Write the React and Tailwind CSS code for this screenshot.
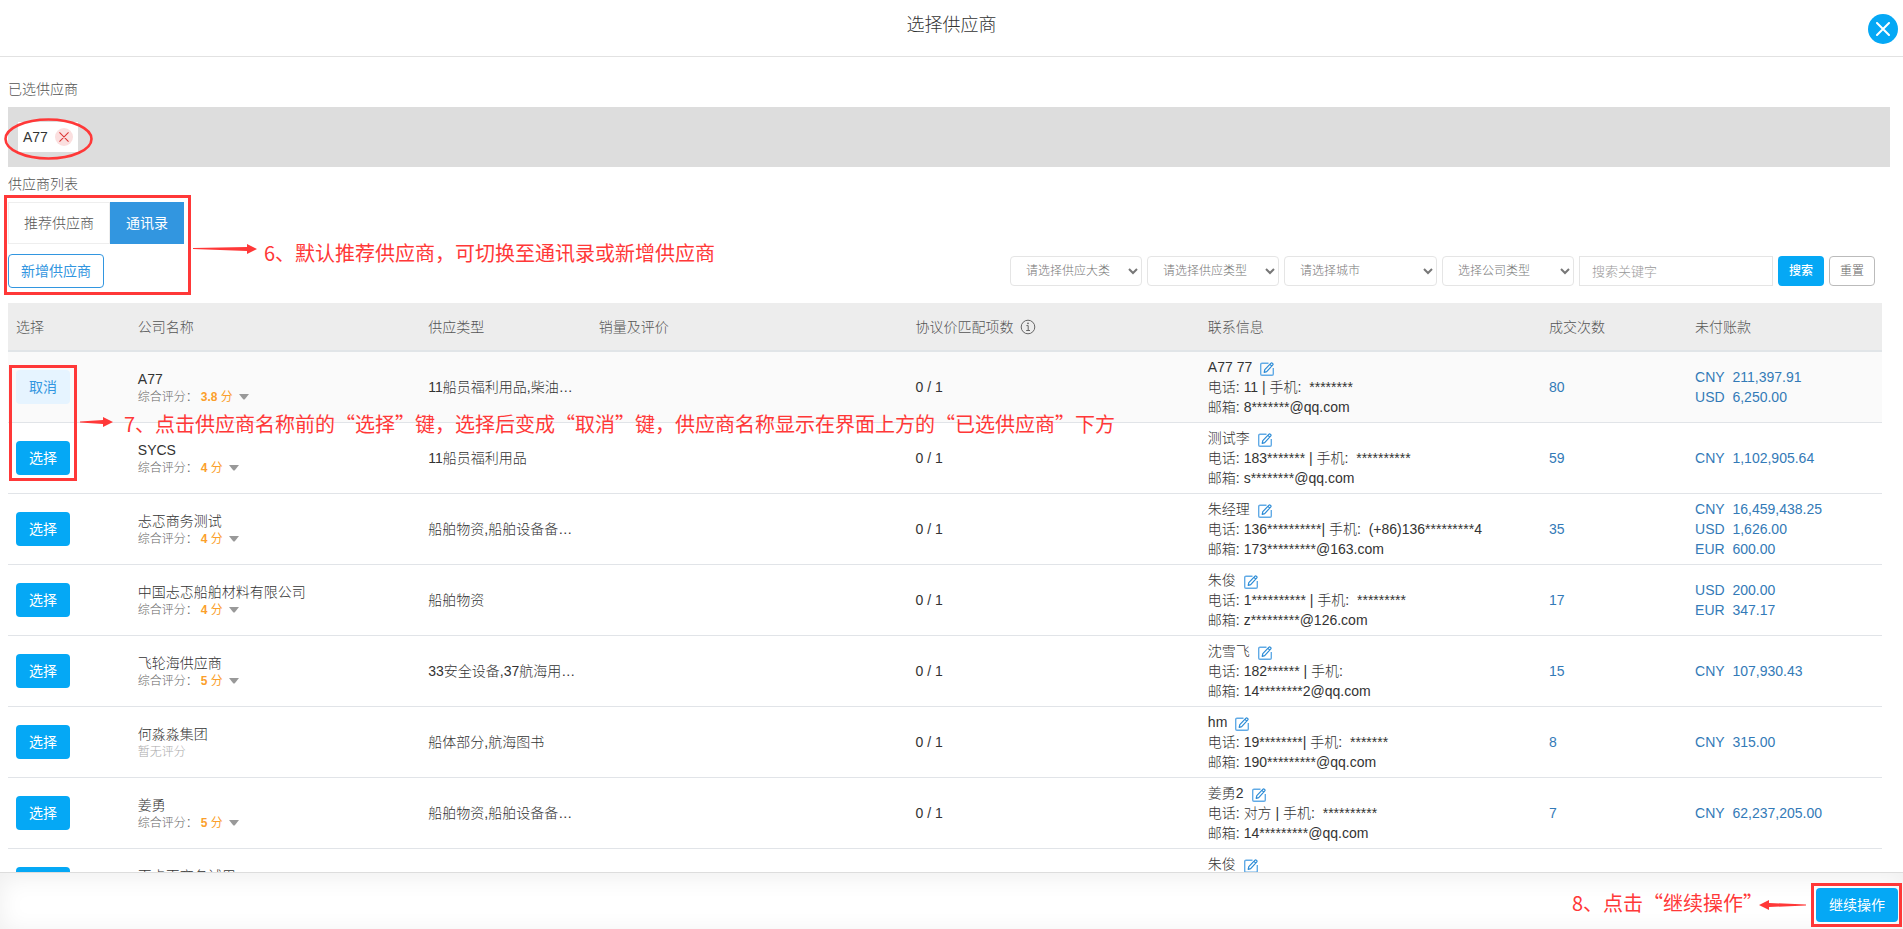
import { useState } from 'react'

const SUPPLIERS = [
  {
    name: 'A77', score: '3.8', type: '11船员福利用品,柴油…', deals: 80,
    contact: 'A77 77', phone: '11 |', mobile: '********', email: '8*******@qq.com',
    unpaid: [['CNY', '211,397.91'], ['USD', '6,250.00']],
  },
  {
    name: 'SYCS', score: '4', type: '11船员福利用品', deals: 59,
    contact: '测试李', phone: '183******* |', mobile: '**********', email: 's********@qq.com',
    unpaid: [['CNY', '1,102,905.64']],
  },
  {
    name: '忐忑商务测试', score: '4', type: '船舶物资,船舶设备备…', deals: 35,
    contact: '朱经理', phone: '136**********|', mobile: '(+86)136*********4', email: '173*********@163.com',
    unpaid: [['CNY', '16,459,438.25'], ['USD', '1,626.00'], ['EUR', '600.00']],
  },
  {
    name: '中国忐忑船舶材料有限公司', score: '4', type: '船舶物资', deals: 17,
    contact: '朱俊', phone: '1********** |', mobile: '*********', email: 'z*********@126.com',
    unpaid: [['USD', '200.00'], ['EUR', '347.17']],
  },
  {
    name: '飞轮海供应商', score: '5', type: '33安全设备,37航海用…', deals: 15,
    contact: '沈雪飞', phone: '182****** |', mobile: '', email: '14********2@qq.com',
    unpaid: [['CNY', '107,930.43']],
  },
  {
    name: '何淼淼集团', score: null, type: '船体部分,航海图书', deals: 8,
    contact: 'hm', phone: '19********|', mobile: '*******', email: '190*********@qq.com',
    unpaid: [['CNY', '315.00']],
  },
  {
    name: '姜勇', score: '5', type: '船舶物资,船舶设备备…', deals: 7,
    contact: '姜勇2', phone: '对方 |', mobile: '**********', email: '14*********@qq.com',
    unpaid: [['CNY', '62,237,205.00']],
  },
  {
    name: '忑忐忑商务试用', score: '4', type: '船舶物资', deals: 6,
    contact: '朱俊', phone: '1********** |', mobile: '*********', email: 'z*********@126.com',
    unpaid: [['CNY', '200.00']],
  },
]

const COLUMNS = [
  { label: '选择', width: 'w-[6.5%]' },
  { label: '公司名称', width: 'w-[15.5%]' },
  { label: '供应类型', width: 'w-[9.1%]' },
  { label: '销量及评价', width: 'w-[16.9%]' },
  { label: '协议价匹配项数', width: 'w-[15.6%]', info: true },
  { label: '联系信息', width: 'w-[18.2%]' },
  { label: '成交次数', width: 'w-[7.8%]' },
  { label: '未付账款', width: '' },
]

const FILTERS = [
  { label: '请选择供应大类', width: 'w-33' },
  { label: '请选择供应类型', width: 'w-33' },
  { label: '请选择城市', width: 'w-[153px]' },
  { label: '选择公司类型', width: 'w-33' },
]

function CrossIcon({ className, strokeWidth }) {
  return (
    <svg viewBox="0 0 14 14" className={className} fill="none" stroke="currentColor" strokeWidth={strokeWidth}>
      <path d="M1 1 13 13M13 1 1 13" strokeLinecap="round" />
    </svg>
  )
}

function EditIcon() {
  return (
    <svg viewBox="0 0 14 14" className="size-3.5" fill="none">
      <path d="M8.5 1.2H2A1.3 1.3 0 0 0 .7 2.5V12A1.3 1.3 0 0 0 2 13.3H12A1.3 1.3 0 0 0 13.3 12V6" stroke="#62abe6" strokeWidth="1.4" />
      <path d="M4.2 10.4 4.8 7.7 11 1.2Q11.6.7 12.3 1.2L12.8 1.7Q13.3 2.3 12.8 2.9L6.7 9.6ZM10 2.4 11.8 4.2" stroke="#2b8bd6" strokeWidth="1.2" strokeLinejoin="round" />
    </svg>
  )
}

function InfoIcon() {
  return (
    <svg viewBox="0 0 16 16" className="size-4" fill="none" stroke="#666" strokeWidth="1">
      <circle cx="8" cy="8" r="6.8" />
      <path d="M6.4 6.6H8.2V11.4M6.2 11.5H10" />
      <circle cx="8" cy="4.3" r="0.9" fill="#666" stroke="none" />
    </svg>
  )
}

function Score({ score }) {
  if (!score) return <div className="text-xs leading-[18px] text-[#aaa]">暂无评分</div>
  return (
    <div className="flex items-center text-xs leading-[18px] text-[#666]">
      综合评分：
      <span className="ml-[3px] font-normal text-[#fb9f2c]">
        <b>{score}</b> 分
      </span>
      <svg viewBox="0 0 10 6" className="ml-1.5 h-1.5 w-2.5" fill="#999">
        <path d="M0 0H10L6 5Q5 6 4 5Z" />
      </svg>
    </div>
  )
}

function SupplierRow({ supplier, selected, onToggle }) {
  return (
    <tr className={`h-[71px] border-b border-[#e1e4e8] ${selected ? 'bg-[#fafafa]' : 'bg-white'}`}>
      <td className="px-2">
        <button
          type="button"
          onClick={onToggle}
          className={`block h-[34px] w-[54px] rounded font-normal ${selected ? 'bg-[#e6f4ff] text-[#3296e0]' : 'bg-[#05a8f5] text-white'}`}
        >
          {selected ? '取消' : '选择'}
        </button>
      </td>
      <td className="px-2 pt-0.5">
        <div className="leading-[18px]">{supplier.name}</div>
        <Score score={supplier.score} />
      </td>
      <td className="px-2 whitespace-nowrap">{supplier.type}</td>
      <td />
      <td className="px-2">0 / 1</td>
      <td className="px-2 py-[5px] leading-5 whitespace-nowrap">
        <div className="flex items-center gap-2">
          {supplier.contact}
          <button type="button" aria-label="编辑" className="pt-1">
            <EditIcon />
          </button>
        </div>
        <div>电话: {supplier.phone} 手机:&nbsp;&nbsp;{supplier.mobile}</div>
        <div>邮箱: {supplier.email}</div>
      </td>
      <td className="px-2">
        <a href="#deals" className="text-[#337ab7]">{supplier.deals}</a>
      </td>
      <td className="px-2 leading-5">
        {supplier.unpaid.map(([currency, amount]) => (
          <a key={currency} href="#unpaid" className="block text-[#337ab7]">
            {currency}&nbsp;&nbsp;{amount}
          </a>
        ))}
      </td>
    </tr>
  )
}

// Red guide marks drawn over the dialog
function Guides() {
  return (
    <div className="pointer-events-none absolute inset-0 text-xl leading-7 font-normal whitespace-nowrap text-[#ff3838]">
      <svg className="absolute top-[117px] left-1 h-11 w-[90px]" viewBox="0 0 90 44" fill="none">
        <ellipse cx="44.5" cy="22" rx="43" ry="19.5" stroke="#ff3838" strokeWidth="2.6" />
      </svg>

      <div className="absolute top-[195px] left-1 h-[100px] w-[187px] border-3 border-[#ff3838]" />
      <svg className="absolute top-[243px] left-[193px] h-3 w-16" viewBox="0 0 64 12" fill="#ff3838">
        <path d="M0 5 54 4V1L64 6 54 11V8L0 6Z" />
      </svg>
      <p className="absolute top-[239px] left-[264px] font-['Noto_Sans_CJK_SC',sans-serif]">
        6、默认推荐供应商，可切换至通讯录或新增供应商
      </p>

      <div className="absolute top-[365px] left-[9px] h-[116px] w-[68px] border-3 border-[#ff3838]" />
      <svg className="absolute top-[416px] left-20 h-3 w-[34px]" viewBox="0 0 34 12" fill="#ff3838">
        <path d="M0 5.5 23 4V1L33 6 23 11V8L0 6.5Z" />
      </svg>
      <p className="absolute top-[410px] left-[124px] font-['Noto_Sans_CJK_SC',sans-serif]">
        7、点击供应商名称前的“选择”键，选择后变成“取消”键，供应商名称显示在界面上方的“已选供应商”下方
      </p>

      <div className="absolute right-px bottom-0.5 h-11 w-[91px] border-3 border-[#ff3838]" />
      <svg className="absolute right-[97px] bottom-[18px] h-3 w-12" viewBox="0 0 48 12" fill="#ff3838">
        <path d="M48 5.5 11 4V1L1 6 11 11V8L48 6.5Z" />
      </svg>
      <p className="absolute right-[140px] bottom-3 font-['Noto_Sans_CJK_SC',sans-serif]">
        8、点击“继续操作”
      </p>
    </div>
  )
}

export default function App() {
  const [selected, setSelected] = useState(['A77'])

  const toggle = name =>
    setSelected(prev => (prev.includes(name) ? prev.filter(n => n !== name) : [...prev, name]))

  return (
    <div
      lang="zh-CN"
      className="relative flex h-screen flex-col overflow-hidden bg-white font-['Liberation_Sans','Noto_Sans_CJK_SC',sans-serif] text-sm font-light text-[#333]"
    >
      <header className="relative flex h-[57px] shrink-0 justify-center border-b border-[#e2e2e2] pt-[13px]">
        <h1 className="text-lg leading-6">选择供应商</h1>
        <button
          type="button"
          aria-label="关闭"
          className="absolute top-3.5 right-[5px] flex size-[30px] items-center justify-center rounded-full bg-[#05a8f5] text-white"
        >
          <CrossIcon className="size-3.5" strokeWidth={2} />
        </button>
      </header>

      <main className="min-h-0 flex-1 overflow-hidden pt-[22px] pr-[13px] pl-2">
        <h2 className="leading-5 text-[#555]">已选供应商</h2>
        <div className="mt-2 flex min-h-15 items-start gap-2 bg-[#ddd] px-2.5 py-[15px]">
          {selected.map(name => (
            <span key={name} className="flex h-[30px] items-center gap-[7px] bg-white px-[5px]">
              {name}
              <button
                type="button"
                aria-label={`移除 ${name}`}
                onClick={() => toggle(name)}
                className="flex size-[18px] items-center justify-center rounded-full bg-[#fbdfdf] text-[#dc3535]"
              >
                <CrossIcon className="size-2.5" strokeWidth={1.5} />
              </button>
            </span>
          ))}
        </div>

        <h2 className="mt-[7px] leading-5 text-[#555]">供应商列表</h2>
        <div className="mt-2 flex">
          <button type="button" className="h-[42px] border border-[#eee] px-[15px] text-[#555]">推荐供应商</button>
          <button type="button" className="h-[42px] bg-[#3296e0] px-4 font-normal text-white">通讯录</button>
        </div>

        <div className="mt-2.5 flex items-center justify-between pr-[15px]">
          <button type="button" className="h-[34px] rounded border border-[#3296e0] px-3 font-normal text-[#3296e0]">
            新增供应商
          </button>
          <form className="flex gap-[5px] text-xs" onSubmit={e => e.preventDefault()}>
            {FILTERS.map(f => (
              <select
                key={f.label}
                aria-label={f.label}
                className={`h-[30px] rounded border border-[#e5e5e5] bg-white pl-[11px] text-[#777] ${f.width}`}
              >
                <option>{f.label}</option>
              </select>
            ))}
            <input
              type="text"
              aria-label="搜索关键字"
              placeholder="搜索关键字"
              className="h-[30px] w-[194px] border border-[#e5e5e5] px-3 text-[13px] placeholder:text-[#999]"
            />
            <button type="submit" className="h-[30px] w-[46px] rounded bg-[#05a8f5] font-medium text-white">搜索</button>
            <button type="reset" className="h-[30px] w-[46px] rounded border border-[#bbb] text-[#666]">重置</button>
          </form>
        </div>

        <div className="mt-[15px] pr-2">
          <table className="w-full table-fixed border-collapse">
            <thead>
              <tr className="h-12 border-b-2 border-[#e1e5e8] bg-[#ededed] text-left text-[#555]">
                {COLUMNS.map(col => (
                  <th key={col.label} className={`px-2 font-light whitespace-nowrap ${col.width}`}>
                    <span className="flex items-center gap-1.5">
                      {col.label}
                      {col.info && <InfoIcon />}
                    </span>
                  </th>
                ))}
              </tr>
            </thead>
            <tbody>
              {SUPPLIERS.map(s => (
                <SupplierRow
                  key={s.name}
                  supplier={s}
                  selected={selected.includes(s.name)}
                  onToggle={() => toggle(s.name)}
                />
              ))}
            </tbody>
          </table>
        </div>
      </main>

      <footer className="flex h-[57px] shrink-0 items-start justify-end border-t border-[#ddd] bg-white pt-[15px] pr-[5px] shadow-[inset_0_4px_24px_rgba(0,0,0,0.07)]">
        <button type="button" className="h-[34px] w-[82px] rounded bg-[#05a8f5] font-normal text-white">
          继续操作
        </button>
      </footer>

      <Guides />
    </div>
  )
}
